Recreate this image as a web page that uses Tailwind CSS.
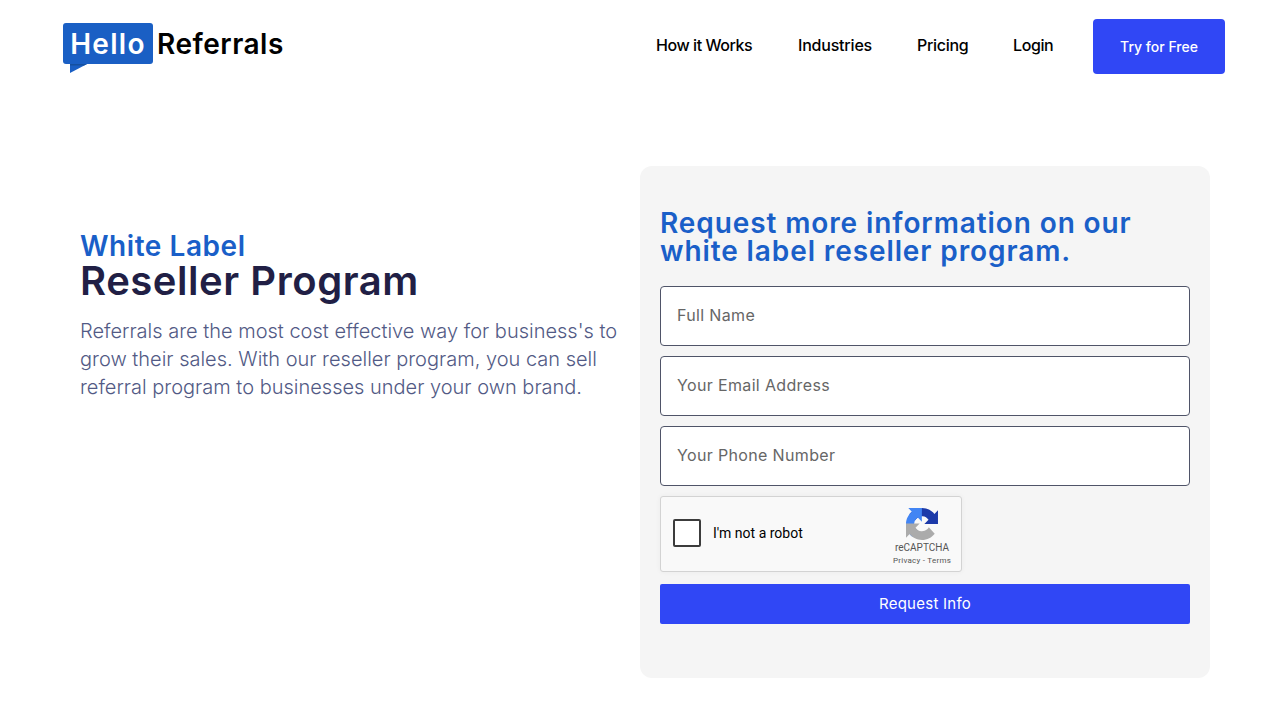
<!DOCTYPE html>
<html>
<head>
<meta charset="utf-8">
<script src="https://cdn.jsdelivr.net/npm/@tailwindcss/browser@4"></script>
</head>
<body class="bg-white font-['Inter','Open_Sans',sans-serif] overflow-hidden">
<div class="w-[1280px] h-[720px] overflow-hidden">
  <header class="flex items-start justify-between pl-[63px] pr-[55px] pt-[19px] h-[166px]">
    <div class="flex items-start pt-[4px]">
      <div class="relative w-[90px] h-[41px] bg-[#1a5fc4] rounded-[3px] flex items-center justify-center text-white text-[28px] font-semibold leading-none tracking-[1.3px]">Hello
        <svg class="absolute left-[7px] top-[40px]" width="19" height="10" viewBox="0 0 19 10"><path d="M0 0H19L0 10Z" fill="#1a5fc4"/><path d="M0 1H17L14 2.500H0Z" fill="#15509f"/></svg>
      </div>
      <span class="ml-[4px] h-[41px] flex items-center text-[28px] font-semibold leading-none text-black tracking-[0.5px]">Referrals</span>
    </div>
    <nav class="flex items-start">
      <a class="mt-[16px] w-[142px] text-[16px] leading-[20px] font-medium text-black tracking-[-0.45px]">How it Works</a>
      <a class="mt-[16px] w-[119px] text-[16px] leading-[20px] font-medium text-black tracking-[-0.2px]">Industries</a>
      <a class="mt-[16px] w-[96px] text-[16px] leading-[20px] font-medium text-black tracking-[-0.3px]">Pricing</a>
      <a class="mt-[16px] w-[80px] text-[16px] leading-[20px] font-medium text-black tracking-[-0.4px]">Login</a>
      <a class="w-[132px] h-[55px] bg-[#3047f5] rounded-[4px] flex items-center justify-center text-white text-[14px] font-medium pb-[1px]">Try for Free</a>
    </nav>
  </header>
  <main class="flex items-start pl-[80px]">
    <section class="w-[560px] pt-[64px]">
      <h2 class="text-[28px] leading-[32px] font-semibold text-[#1a5fc8] tracking-[0.55px]">White Label</h2>
      <h1 class="text-[40px] leading-[38px] font-semibold text-[#211f45] tracking-[0.55px]">Reseller Program</h1>
      <p class="mt-[17px] text-[20px] leading-[28px] font-light text-[#525a85]">Referrals are the most cost effective way for business's to grow their sales. With our reseller program, you can sell referral program to businesses under your own brand.</p>
    </section>
    <section class="w-[570px] h-[512px] bg-[#f5f5f5] rounded-[12px] px-[20px] pt-[43px]">
      <h3 class="text-[28px] leading-[28px] font-semibold text-[#1a5fc8] tracking-[0.9px]">Request more information on our white label reseller program.</h3>
      <form class="mt-[21px] flex flex-col gap-[10px]">
        <div class="h-[60px] bg-white border border-[#4f5468] rounded-[4px] flex items-center px-[16px] pb-[2px] text-[16px] text-[#666] tracking-[0.35px]">Full Name</div>
        <div class="h-[60px] bg-white border border-[#4f5468] rounded-[4px] flex items-center px-[16px] pb-[2px] text-[16px] text-[#666] tracking-[0.35px]">Your Email Address</div>
        <div class="h-[60px] bg-white border border-[#4f5468] rounded-[4px] flex items-center px-[16px] pb-[2px] text-[16px] text-[#666] tracking-[0.35px]">Your Phone Number</div>
        <div class="relative w-[302px] h-[76px] bg-[#f9f9f9] border border-[#d3d3d3] rounded-[3px] flex items-center pl-[12px] pr-[9px] pb-[2px] shadow-[0_0_4px_1px_rgba(0,0,0,0.03)]">
          <div class="w-[28px] h-[28px] bg-white border-2 border-[#3c3c3c] rounded-[2px]"></div>
          <span class="ml-[12px] text-[14px] font-['Roboto',sans-serif] text-black">I'm not a robot</span>
          <div class="ml-auto w-[60px] flex flex-col items-center self-start pt-[11px] font-['Roboto',sans-serif] text-[#555]">
            <svg width="32" height="32" viewBox="0 0 64 64">
              <path d="M64 31.955l-.033-1.37V4.687l-7.16 7.16C50.948 4.674 42.033.093 32.05.093c-10.4 0-19.622 4.96-25.458 12.64l11.736 11.86a15.55 15.55 0 0 1 4.754-5.334c2.05-1.6 4.952-2.906 8.968-2.906.485 0 .86.057 1.135.163 4.976.393 9.288 3.14 11.828 7.124l-8.307 8.307c10.522-.04 22.4-.066 27.295.006" fill="#1c3aa9"/>
              <path d="M31.862.094l-1.37.033H4.594l7.16 7.16C4.58 13.147 0 22.06 0 32.046c0 10.4 4.96 19.622 12.64 25.458l11.86-11.736a15.55 15.55 0 0 1-5.334-4.754c-1.6-2.05-2.906-4.952-2.906-8.968 0-.485.057-.86.163-1.135.393-4.976 3.14-9.288 7.124-11.828l8.307 8.307c-.04-10.522-.066-22.4.006-27.295" fill="#4285f4"/>
              <path d="M.001 32.045l.033 1.37v25.898l7.16-7.16c5.858 7.173 14.772 11.753 24.76 11.753 10.4 0 19.622-4.96 25.458-12.64L45.677 38.407a15.55 15.55 0 0 1-4.754 5.334c-2.05 1.6-4.952 2.906-8.968 2.906-.485 0-.86-.057-1.135-.163-4.976-.393-9.288-3.14-11.828-7.124l8.307-8.307c-10.522.04-22.4.066-27.295-.006" fill="#ababab"/>
            </svg>
            <span class="text-[10px] leading-[12px] mt-[2px]">reCAPTCHA</span>
            <span class="text-[8px] leading-[10px] mt-[2px] tracking-[0.25px]">Privacy - Terms</span>
          </div>
        </div>
        <div class="mt-[2px] h-[40px] bg-[#3047f5] rounded-[2px] flex items-center justify-center text-white text-[15px] tracking-[0.25px]">Request Info</div>
      </form>
    </section>
  </main>
</div>
</body>
</html>
